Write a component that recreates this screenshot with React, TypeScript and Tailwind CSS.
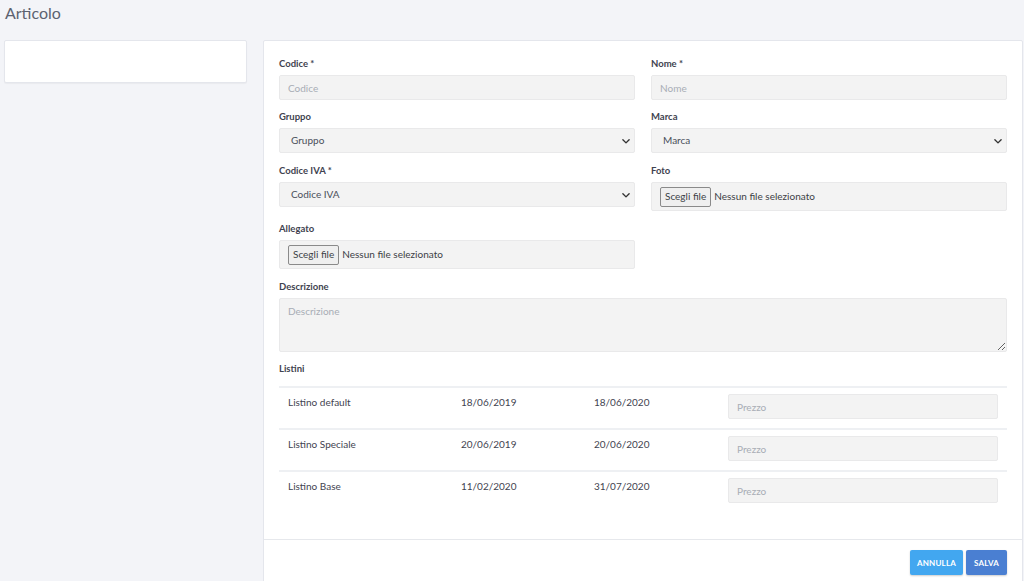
import React from "react";

const font = { fontFamily: "Lato, 'Open Sans', sans-serif" };

const Label = ({ children }: { children: React.ReactNode }) => (
  <div className="mb-[4px] text-[9.5px] font-bold leading-[14px] text-[#3f4350]">{children}</div>
);

const TextInput = ({ placeholder, className = "" }: { placeholder: string; className?: string }) => (
  <input
    placeholder={placeholder}
    className={`block h-[25px] w-full rounded-[2px] border border-[#e9e9ea] bg-[#f3f3f3] px-[8px] text-[10px] text-[#4a4f5a] outline-none placeholder:text-[#a8adb5] ${className}`}
    style={font}
  />
);

const SelectBox = ({ value }: { value: string }) => (
  <div className="flex h-[25px] w-full items-center justify-between rounded-[2px] border border-[#e9e9ea] bg-[#f3f3f3] pl-[11px] pr-[2px] text-[10px] text-[#4a4f5a]">
    <span>{value}</span>
    <svg width="10" height="10" viewBox="0 0 16 16" className="mr-[1px]">
      <path d="M3 6l5 5 5-5" fill="none" stroke="#333" strokeWidth="2.2" strokeLinecap="round" strokeLinejoin="round" />
    </svg>
  </div>
);

const FileBox = () => (
  <div className="flex h-[29px] w-full items-center rounded-[2px] border border-[#e9e9ea] bg-[#f3f3f3] pl-[8px] text-[10px] text-[#3c3f46]">
    <span className="flex h-[20px] items-center rounded-[2px] border border-[#8a8a8a] bg-[#efefef] px-[4px]">Scegli file</span>
    <span className="ml-[3px]">Nessun file selezionato</span>
  </div>
);

const listini = [
  { nome: "Listino default", da: "18/06/2019", a: "18/06/2020" },
  { nome: "Listino Speciale", da: "20/06/2019", a: "20/06/2020" },
  { nome: "Listino Base", da: "11/02/2020", a: "31/07/2020" },
];

export default function App() {
  return (
    <div className="h-[581px] overflow-hidden bg-[#f3f4f8]" style={font}>
      <div className="flex h-[40px] items-start px-[5px] pt-[3px]">
        <h1 className="text-[16px] leading-[20px] text-[#5c6270]">Articolo</h1>
      </div>
      <div className="flex items-start gap-[16px] pl-[4px] pr-[1px]">
        <div className="h-[43px] w-[243px] rounded-[2px] border border-[#e4e6ec] bg-white shadow-[0_1px_1px_rgba(0,0,0,0.04)]" />
        <div className="flex-1 rounded-[2px] border border-[#e4e6ec] bg-white">
          <div className="px-[15px] pb-[25px] pt-[16px]">
            <div className="grid grid-cols-2 gap-x-[16px]">
              <div className="mb-[10px]">
                <Label>Codice *</Label>
                <TextInput placeholder="Codice" />
              </div>
              <div className="mb-[10px]">
                <Label>Nome *</Label>
                <TextInput placeholder="Nome" />
              </div>
              <div className="mb-[11px]">
                <Label>Gruppo</Label>
                <SelectBox value="Gruppo" />
              </div>
              <div className="mb-[11px]">
                <Label>Marca</Label>
                <SelectBox value="Marca" />
              </div>
              <div className="mb-[11px]">
                <Label>Codice IVA *</Label>
                <SelectBox value="Codice IVA" />
              </div>
              <div className="mb-[11px]">
                <Label>Foto</Label>
                <FileBox />
              </div>
              <div className="mb-[11px]">
                <Label>Allegato</Label>
                <FileBox />
              </div>
              <div />
            </div>
            <div className="mb-[10px]">
              <Label>Descrizione</Label>
              <textarea
                placeholder="Descrizione"
                className="block h-[54px] w-full rounded-[2px] border border-[#e9e9ea] bg-[#f3f3f3] px-[8px] py-[5px] text-[10px] text-[#4a4f5a] outline-none placeholder:text-[#a8adb5]"
                style={font}
              />
            </div>
            <div className="mb-[10px] text-[9.5px] font-bold leading-[14px] text-[#3f4350]">Listini</div>
            <div className="border-t-2 border-[#eef0f3]">
              {listini.map((l, i) => (
                <div
                  key={l.nome}
                  className={`grid h-[42px] grid-cols-[173px_133px_134px_1fr] text-[10px] leading-[12px] text-[#3f4350] ${
                    i < listini.length - 1 ? "border-b-2 border-[#eef0f3]" : ""
                  }`}
                >
                  <div className="px-[9px] pt-[8px]">{l.nome}</div>
                  <div className="px-[9px] pt-[8px]">{l.da}</div>
                  <div className="px-[9px] pt-[8px]">{l.a}</div>
                  <div className="px-[9px] pt-[6px]">
                    <TextInput placeholder="Prezzo" />
                  </div>
                </div>
              ))}
            </div>
          </div>
          <div className="flex h-[60px] justify-end gap-[3px] border-t border-[#e6e8ec] px-[15px] pt-[10px]">
            <button className="h-[25px] w-[53px] rounded-[2px] bg-[#42a7f0] text-[8px] font-bold tracking-[0.2px] text-white shadow-[0_1px_2px_rgba(0,0,0,0.2)]">
              ANNULLA
            </button>
            <button className="h-[25px] w-[41px] rounded-[2px] bg-[#4a7fd2] text-[8px] font-bold tracking-[0.2px] text-white shadow-[0_1px_2px_rgba(0,0,0,0.2)]">
              SALVA
            </button>
          </div>
        </div>
      </div>
    </div>
  );
}
